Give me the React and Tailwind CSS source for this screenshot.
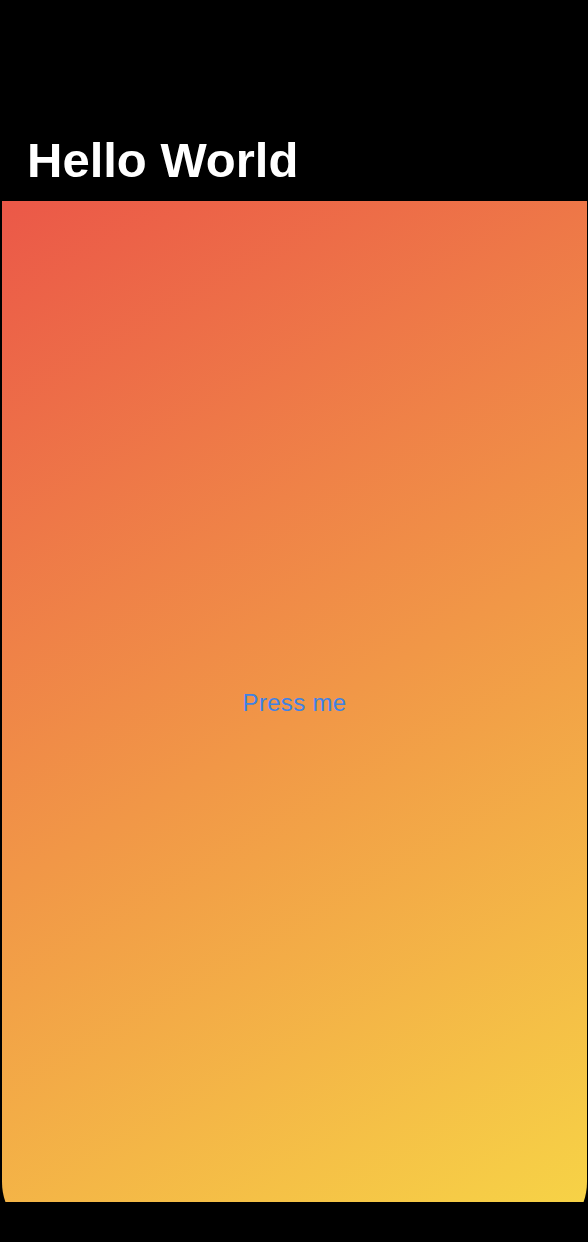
export default function App() {
  return (
    <div className="w-[588px] h-[1242px] bg-black flex flex-col overflow-hidden" style={{ fontFamily: '"Liberation Sans", Arial, sans-serif' }}>
      <div className="h-[201px] shrink-0 pt-[136px] pl-[27px]">
        <h1 className="text-white font-bold text-[49px] leading-[49px]">Hello World</h1>
      </div>
      <div className="h-[1001px] shrink-0 ml-[2px] mr-[1px] overflow-hidden">
        <div className="h-[1041px] rounded-b-[60px] bg-[linear-gradient(150deg,#EB5848,#F7D646)]">
          <div className="h-[1001px] flex items-center justify-center pt-[2px]">
            <button className="text-[#3E82E6] text-[24px] leading-none tracking-[0.3px] bg-transparent">Press me</button>
          </div>
        </div>
      </div>
    </div>
  );
}
